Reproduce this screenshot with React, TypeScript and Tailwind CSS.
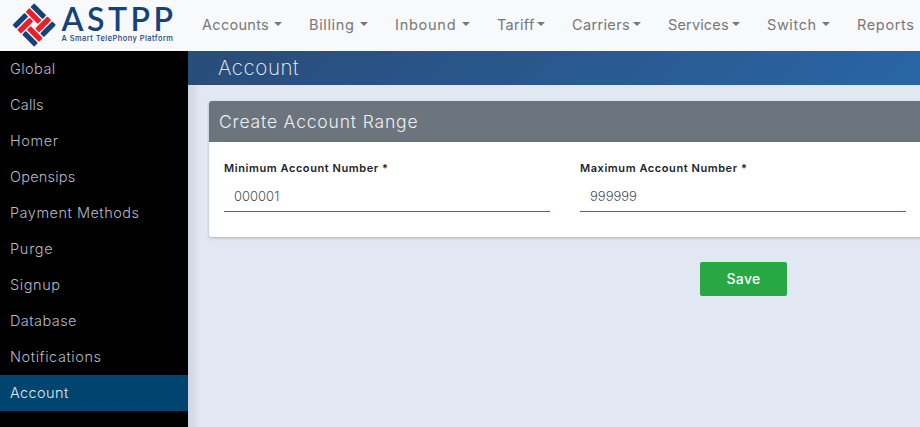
const nav: [string, string][] = [
  ["Accounts", "w-[67px] tracking-[0.3px]"],
  ["Billing", "w-[46px] tracking-[0.65px]"],
  ["Inbound", "w-[62px] tracking-[0.75px]"],
  ["Tariff", "w-[35px] tracking-[0.3px]"],
  ["Carriers", "w-[56px] tracking-[0.35px]"],
  ["Services", "w-[59px] tracking-[0.15px]"],
  ["Switch", "w-[50px] tracking-[0.6px]"],
  ["Reports", "w-[58px] tracking-[0.65px]"],
];
const side: [string, string][] = [
  ["Global", "tracking-[0.45px]"],
  ["Calls", "tracking-[0.2px]"],
  ["Homer", "tracking-[0.6px]"],
  ["Opensips", "tracking-[0.2px]"],
  ["Payment Methods", "tracking-[0.5px]"],
  ["Purge", "tracking-[0.75px]"],
  ["Signup", "tracking-[0.6px]"],
  ["Database", "tracking-[0.42px]"],
  ["Notifications", "tracking-[0.57px]"],
  ["Account", "tracking-[0.4px]"],
];

function Logo() {
  return (
    <svg width="188" height="51" viewBox="0 0 188 51" className="shrink-0" fill="none">
      <g transform="translate(34.2 25) rotate(45)">
        {[0, 90, 180, 270].map((a) => (
          <g key={a} transform={`rotate(${a})`}>
            <rect x="-15.4" y="-15.4" width="17.2" height="5.3" rx="1" fill="#16427a" />
            <rect x="-15.4" y="-8.7" width="17.2" height="5.5" rx="1" fill="#e8202a" />
          </g>
        ))}
      </g>
      <text x="61.5" y="31" fill="#16427a" fontFamily="Lato, sans-serif" fontWeight="600" fontSize="32" textLength="111.5">ASTPP</text>
      <text x="61.5" y="41" fill="#16427a" fontFamily="Inter, sans-serif" fontWeight="500" fontSize="7.5" textLength="111.5">A Smart TelePhony Platform</text>
    </svg>
  );
}

function Field({ label, value }: { label: string; value: string }) {
  return (
    <div className="w-[326.4px]">
      <div className="h-[18px] text-[11px] font-semibold leading-[18px] tracking-[0.57px] text-[#212529]">{label}</div>
      <div className="h-[35px] border-b border-[#1f70c1] pl-[10px] pt-[3px] text-[13px] font-light leading-[32px] text-[#495057]">{value}</div>
    </div>
  );
}

export default function App() {
  return (
    <div className="h-[427px] w-[920px] overflow-hidden bg-[#e2e8f2] font-['Inter',sans-serif]">
      <header className="flex h-[51px] bg-[#f8f9fb]">
        <Logo />
        <nav className="flex h-[49px] gap-[27px] pl-[14px] text-[14.5px] font-normal leading-[49px] text-[#777]">
          {nav.map(([n, c]) => (
            <div key={n} className="flex shrink-0 items-center">
              <span className={"shrink-0 whitespace-nowrap " + c}>{n}</span>
              <i className="ml-[5px] mb-px border-x-4 border-t-4 border-x-transparent border-t-[#777]" />
            </div>
          ))}
        </nav>
      </header>
      <div className="flex h-[376px]">
        <aside className="w-[188px] shrink-0 bg-black">
          {side.map(([n, c]) => (
            <div key={n} className={"h-9 pl-[10px] text-[14.5px] font-light leading-9 " + (n === "Account" ? "bg-[#00456f] text-[#e4e9ee] " : "text-[#b6b9c6] ") + c}>{n}</div>
          ))}
        </aside>
        <main className="w-[732px] shrink-0">
          <h1 className="h-[34px] bg-[linear-gradient(135deg,#294c78,#2965a5)] pl-[30px] text-[20.5px] font-extralight leading-[34px] tracking-[0.55px] text-[#f4f6fa]">Account</h1>
          <div className="h-[342px] bg-[linear-gradient(90deg,#cfd4e1,#e2e8f2_13px)] pt-4">
            <section className="ml-[21px] h-[136px] w-[740px] rounded-[3px] bg-white shadow-[0_1px_3px_rgba(0,0,0,0.25)]">
              <h2 className="h-[41px] rounded-t-[3px] bg-[#6c757d] pl-[10px] text-[17.5px] font-light leading-[42px] tracking-[0.83px] text-[#eef0f2]">Create Account Range</h2>
              <div className="flex gap-[29.6px] pl-[15px] pt-[17px]">
                <Field label="Minimum Account Number *" value="000001" />
                <Field label="Maximum Account Number *" value="999999" />
              </div>
            </section>
            <button className="ml-[512px] mt-[25px] h-[34px] w-[87px] rounded-[2px] bg-[#28a745] pb-px text-[14px] font-medium tracking-[0.3px] text-white">Save</button>
          </div>
        </main>
      </div>
    </div>
  );
}
